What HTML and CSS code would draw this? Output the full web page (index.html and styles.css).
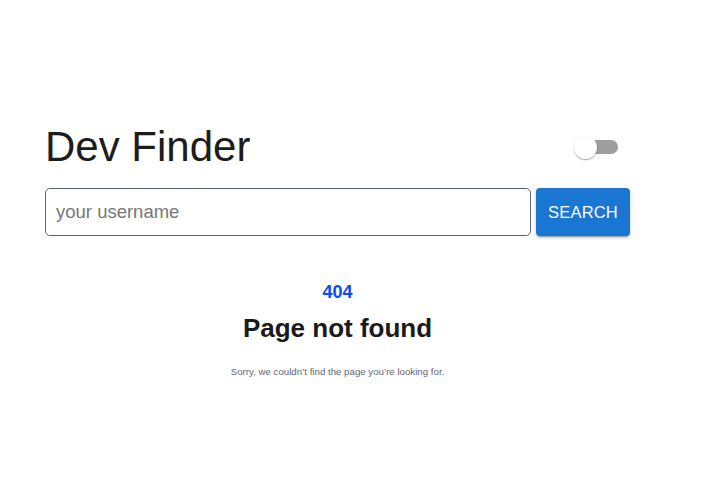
FILE: index.html
```html
<!DOCTYPE html>
<html lang="en">
<head>
<meta charset="utf-8">
<title>Dev Finder</title>
<link rel="stylesheet" href="styles.css">
</head>
<body>
<div class="app">
  <header class="header">
    <h1 class="title">Dev Finder</h1>
    <span class="switch">
      <span class="track"></span>
      <span class="thumb"></span>
    </span>
  </header>
  <form class="search">
    <input class="input" type="text" placeholder="your username">
    <button class="btn" type="button">SEARCH</button>
  </form>
  <main class="notfound">
    <p class="code">404</p>
    <h2 class="heading">Page not found</h2>
    <p class="msg">Sorry, we couldn’t find the page you’re looking for.</p>
  </main>
</div>
</body>
</html>
```
FILE: styles.css
```css
* { box-sizing: border-box; }
html, body { margin: 0; padding: 0; background: #fff; }
body { font-family: "Liberation Sans", Arial, sans-serif; color: #1a1a1a; }
.app { width: 585px; margin: 0 0 0 45px; padding-top: 124px; }
.header { display: flex; justify-content: space-between; align-items: center; height: 46px; }
.title { margin: 0; font-size: 42px; font-weight: 400; line-height: 46px; color: #1c1c1c; }
.switch { position: relative; width: 58px; height: 38px; display: block; }
.track { position: absolute; left: 12px; top: 12px; width: 34px; height: 14px; border-radius: 7px; background: #9e9e9e; }
.thumb { position: absolute; left: 2px; top: 8px; width: 23px; height: 23px; border-radius: 50%; background: #fff;
  box-shadow: 0 2px 1px -1px rgba(0,0,0,.2), 0 1px 1px 0 rgba(0,0,0,.14), 0 1px 3px 0 rgba(0,0,0,.12); }
.search { display: flex; gap: 5px; margin-top: 18px; height: 48px; }
.input { flex: 1; height: 48px; border: 1px solid #5b6577; border-radius: 5px; padding: 0 10px; font-family: inherit; font-size: 18.5px; color: #222; outline: none; }
.input::placeholder { color: #777; }
.btn { width: 94px; height: 48px; border: 0; border-radius: 4px; background: #1976d2; color: #fff; font-family: inherit; font-size: 16.5px; letter-spacing: 0.2px;
  box-shadow: 0 3px 1px -2px rgba(0,0,0,.2), 0 2px 2px 0 rgba(0,0,0,.14), 0 1px 5px 0 rgba(0,0,0,.12); }
.notfound { display: flex; flex-direction: column; align-items: center; margin-top: 46px; }
.code { margin: 0; font-size: 18px; font-weight: 700; color: #0a4cf5; line-height: 21px; }
.heading { margin: 10px 0 0; font-size: 26px; font-weight: 700; color: #1a1a1a; line-height: 30px; }
.msg { margin: 23px 0 0; font-size: 9.7px; color: #5f6573; line-height: 12px; }
```
